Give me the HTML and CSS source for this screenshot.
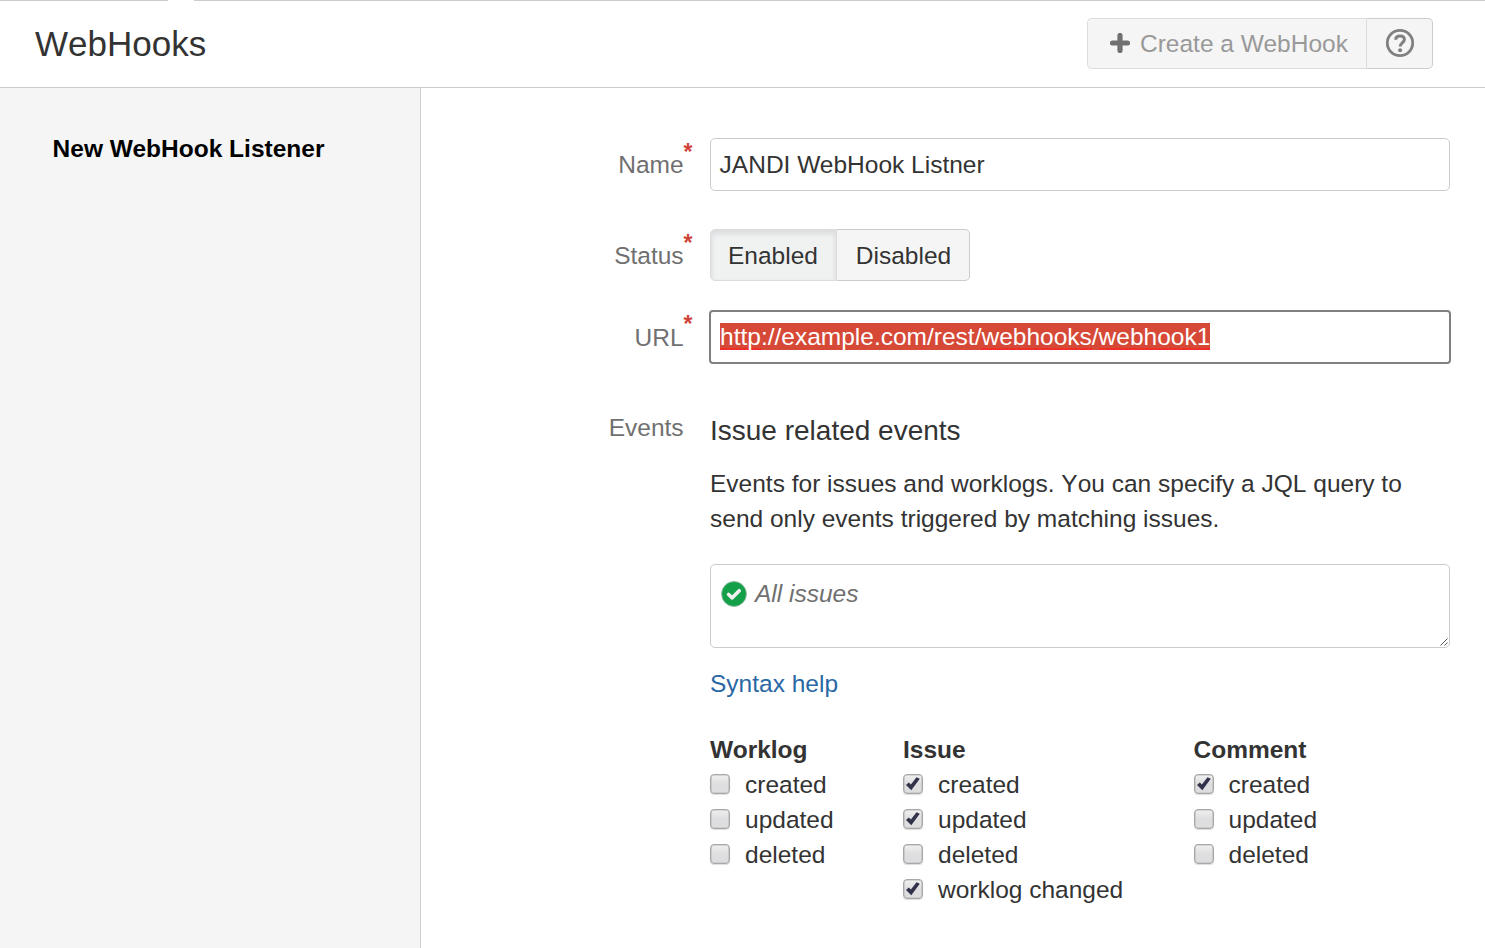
FILE: index.html
```html
<!DOCTYPE html>
<html lang="en">
<head>
<meta charset="utf-8">
<title>WebHooks</title>
<link rel="stylesheet" href="styles.css">
</head>
<body>
<header class="header">
  <span class="header-notch"></span>
  <h1 class="title">WebHooks</h1>
  <div class="actions">
    <button class="btn btn-create" disabled>
      <svg class="plus" width="20" height="20" viewBox="0 0 20 20"><path d="M10 2.500V17.500M2.500 10H17.500" stroke="#707070" stroke-width="5.200" stroke-linecap="round"/></svg>
      <span>Create a WebHook</span>
    </button>
    <button class="btn btn-help" aria-label="Help">
      <svg width="30" height="30" viewBox="0 0 30 30" fill="none" stroke="#808080"><circle cx="15" cy="15" r="12.700" stroke-width="2.800"/><path d="M10.700 11.700C10.800 9.200 12.400 8.100 15 8.100C17.700 8.100 19.400 9.500 19.400 11.600C19.400 14.600 15.200 14.800 15.200 18.500" stroke-width="3"/><circle cx="15.100" cy="22.200" r="2" fill="#808080" stroke="none"/></svg>
    </button>
  </div>
</header>
<div class="layout">
  <nav class="sidebar"><a class="nav-item">New WebHook Listener</a></nav>
  <main class="content">
    <div class="row row-name">
      <label class="label">Name<span class="required">*</span></label>
      <div class="field input">JANDI WebHook Listner</div>
    </div>
    <div class="row row-status">
      <label class="label">Status<span class="required">*</span></label>
      <div class="toggle"><button class="toggle-btn active">Enabled</button><button class="toggle-btn">Disabled</button></div>
    </div>
    <div class="row row-url">
      <label class="label">URL<span class="required">*</span></label>
      <div class="field input focused"><span class="selection"><span class="misspelt">http</span>://example.com/rest/<span class="misspelt">webhooks</span>/<span class="misspelt">webhook1</span></span></div>
    </div>
    <div class="row row-events">
      <label class="label">Events</label>
      <section class="field">
        <h2 class="subtitle">Issue related events</h2>
        <p class="description">Events for issues and worklogs. You can specify a JQL query to send only events triggered by matching issues.</p>
        <div class="query">
          <svg width="26" height="26" viewBox="0 0 26 26"><circle cx="13" cy="13" r="12.400" fill="#14a048" stroke="#8fb59d" stroke-width=".8"/><path d="M7.600 13.500L11.200 16.800L18.200 9.800" fill="none" stroke="#f0f0f0" stroke-width="3.700" stroke-linecap="round" stroke-linejoin="round"/></svg>
          <span class="placeholder">All issues</span>
          <svg class="grip" width="10" height="10" viewBox="0 0 10 10"><path d="M1.500 8.500L8.500 1.500M5.500 8.500L8.500 5.500" stroke="#555" stroke-width="1"/></svg>
        </div>
        <a class="syntax">Syntax help</a>
        <div class="events">
          <div class="group">
            <h3 class="group-title">Worklog</h3>
            <label class="option"><span class="box"></span>created</label>
            <label class="option"><span class="box"></span>updated</label>
            <label class="option"><span class="box"></span>deleted</label>
          </div>
          <div class="group">
            <h3 class="group-title">Issue</h3>
            <label class="option"><span class="box"><svg class="check" viewBox="0 0 20 20"><path d="M3 11L5.800 8.600L7.900 10.600L13.500 3.300L16.800 4.800L8.300 16.300Z"/></svg></span>created</label>
            <label class="option"><span class="box"><svg class="check" viewBox="0 0 20 20"><path d="M3 11L5.800 8.600L7.900 10.600L13.500 3.300L16.800 4.800L8.300 16.300Z"/></svg></span>updated</label>
            <label class="option"><span class="box"></span>deleted</label>
            <label class="option"><span class="box"><svg class="check" viewBox="0 0 20 20"><path d="M3 11L5.800 8.600L7.900 10.600L13.500 3.300L16.800 4.800L8.300 16.300Z"/></svg></span>worklog changed</label>
          </div>
          <div class="group">
            <h3 class="group-title">Comment</h3>
            <label class="option"><span class="box"><svg class="check" viewBox="0 0 20 20"><path d="M3 11L5.800 8.600L7.900 10.600L13.500 3.300L16.800 4.800L8.300 16.300Z"/></svg></span>created</label>
            <label class="option"><span class="box"></span>updated</label>
            <label class="option"><span class="box"></span>deleted</label>
          </div>
        </div>
      </section>
    </div>
  </main>
</div>
</body>
</html>
```
FILE: styles.css
```css
* { box-sizing: border-box; }
body {
  margin: 0;
  height: 948px;
  display: flex;
  flex-direction: column;
  overflow: hidden;
  background: #fff;
  color: #333;
  font: 24.5px/35px "Liberation Sans", Arial, sans-serif;
}
h1, h2, h3, p { margin: 0; }
svg { display: block; flex: none; }
button { font: inherit; color: inherit; }

.header {
  position: relative;
  height: 88px;
  flex: none;
  display: flex;
  align-items: center;
  justify-content: space-between;
  padding: 0 52px 2px 35px;
  border-top: 1px solid #ccc;
  border-bottom: 1px solid #ccc;
}
.header-notch { position: absolute; left: 168px; top: -1px; width: 26px; height: 1px; background: #fff; }
.title { font-size: 35px; font-weight: 400; font-kerning: none; }
.actions { display: flex; height: 51px; }
.btn {
  display: flex;
  align-items: center;
  padding: 0;
  background: #f5f5f5;
  border: 1px solid #ccc;
}
.btn-create {
  width: 279px;
  gap: 10px;
  padding-left: 22px;
  border-color: #ddd;
  border-right: 0;
  border-radius: 5px 0 0 5px;
  color: #999;
  white-space: nowrap;
}
.btn-help {
  width: 67px;
  justify-content: center;
  border-left-color: #ddd;
  border-radius: 0 5px 5px 0;
}

.layout { flex: 1; display: flex; min-height: 0; }
.sidebar {
  width: 421px;
  flex: none;
  padding: 43px 0 0 52.600px;
  background: #f5f5f5;
  border-right: 1px solid #ccc;
}
.nav-item { display: block; color: #000; font-weight: 700; white-space: nowrap; }
.content { flex: 1; padding: 50px 35px 0 0; }

.row { display: grid; grid-template-columns: 263px 740px; column-gap: 26px; }
.row-name { margin-bottom: 38px; }
.row-status { margin-bottom: 29px; }
.row-url { margin-bottom: 49px; }
.label { position: relative; left: -.4px; color: #707070; text-align: right; padding-top: 9px; }
.row-url .label { padding-top: 10px; }
.row-events .label { padding-top: 0; margin-top: -3px; }
.required {
  position: absolute;
  left: 100%;
  top: -3px;
  color: #d04437;
  font: 700 23px/35px "Liberation Sans", Arial, sans-serif;
}
.input {
  height: 53px;
  padding: 8px 8.600px;
  border: 1px solid #ccc;
  border-radius: 5px;
}
.focused {
  height: 54px;
  margin: 0 -1px;
  padding-left: 9px;
  border: 2px solid #808080;
  border-radius: 4px;
}
.selection { display: inline-block; height: 27px; line-height: 27px; color: #fff; background: #d64937; margin-top: 3px; vertical-align: top; }
.misspelt {
  display: inline-block;
  height: 27px;
  background: repeating-linear-gradient(90deg, #f22 0 1px, #e33a30 1px 2px) left bottom / 100% 2px no-repeat;
}
.toggle { display: flex; height: 52px; }
.toggle-btn {
  width: 133px;
  padding: 0 0 0 1px;
  background: #f5f5f5;
  border: 1px solid #ccc;
  border-left: 0;
  border-radius: 0 5px 5px 0;
}
.toggle-btn.active {
  width: 127px;
  padding: 0 1px 0 0;
  background: #f0f2f2;
  border: 1px solid #dcdcde;
  border-radius: 5px 0 0 5px;
  box-shadow: inset 0 3px 5px 1px #dcdcde;
}
.subtitle { font-size: 28px; font-weight: 400; }
.description { margin-top: 18px; font-kerning: none; }
.query {
  position: relative;
  display: flex;
  gap: 8px;
  height: 84px;
  margin-top: 28px;
  padding: 11px 10px;
  border: 1px solid #ccc;
  border-radius: 5px;
}
.query > svg:first-child { margin-top: 5px; }
.placeholder { color: #707070; font-style: italic; }
.grip { position: absolute; right: 0; bottom: 0; }
.syntax { display: block; margin-top: 18px; color: #2a67a5; }
.events { display: grid; grid-template-columns: 193px 290.500px 1fr; margin-top: 31px; }
.group-title { font-size: 24.5px; font-weight: 700; }
.option { display: flex; gap: 15px; }
.box {
  width: 20px;
  height: 20px;
  margin-top: 7px;
  border: 1.500px solid #a8a8a8;
  border-radius: 4px;
  background: linear-gradient(#f0f0f0, #dedee0 50%);
  box-shadow: inset 0 0 0 .6px #bbb, 0 1px 1px #ddd;
}
.check { width: 20px; height: 20px; margin: -1px; fill: #32324a; }
```
